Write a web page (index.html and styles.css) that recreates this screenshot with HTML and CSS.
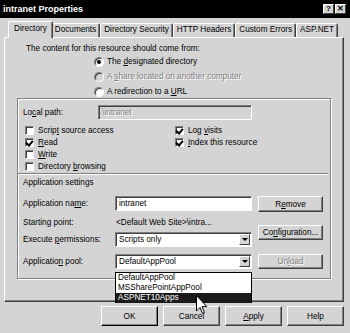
FILE: index.html
```html
<!DOCTYPE html>
<html lang="en">
<head>
    <meta charset="UTF-8">
    <title>intranet Properties</title>
    <link rel="stylesheet" href="styles.css">
</head>
<body>
<div class="dialog">
    <div class="titlebar">
        <span class="title">intranet Properties</span>
        <span class="tbtns"><span class="tbtn">?</span><span class="tbtn">&#x2715;</span></span>
    </div>
    <div class="tabs">
        <span class="tab active">Directory</span>
        <span class="tab">Documents</span>
        <span class="tab">Directory Security</span>
        <span class="tab">HTTP Headers</span>
        <span class="tab">Custom Errors</span>
        <span class="tab">ASP.NET</span>
    </div>
    <div class="panel">
        <p class="intro">The content for this resource should come from:</p>
        <div class="radios">
            <div class="radio"><span class="rb on"></span><span>The <u>d</u>esignated directory</span></div>
            <div class="radio disabled"><span class="rb"></span><span>A <u>s</u>hare located on another computer</span></div>
            <div class="radio"><span class="rb"></span><span>A redirection to a <u>U</u>RL</span></div>
        </div>
        <div class="group">
            <div class="pathrow">
                <span class="lbl">Lo<u>c</u>al path:</span>
                <span class="field off">\intranet</span>
            </div>
            <div class="checks">
                <div class="check"><span class="cb"></span><span>Scrip<u>t</u> source access</span></div>
                <div class="check"><span class="cb on"></span><span>Log <u>v</u>isits</span></div>
                <div class="check"><span class="cb on"></span><span><u>R</u>ead</span></div>
                <div class="check"><span class="cb on"></span><span><u>I</u>ndex this resource</span></div>
                <div class="check"><span class="cb"></span><span><u>W</u>rite</span></div>
                <div class="check"></div>
                <div class="check"><span class="cb"></span><span>Directory <u>b</u>rowsing</span></div>
            </div>
            <div class="sep"></div>
            <div class="settings">Application settings</div>
            <div class="form">
                <div class="grid">
                    <span class="lbl">Application na<u>m</u>e:</span>
                    <span class="field">intranet</span>
                    <span class="lbl">Starting point:</span>
                    <span class="plain">&lt;Default Web Site&gt;\intra...</span>
                    <span class="lbl">Execute <u>p</u>ermissions:</span>
                    <span class="field select">Scripts only<span class="arrow"></span></span>
                    <span class="lbl">Applicatio<u>n</u> pool:</span>
                    <span class="field select">DefaultAppPool<span class="arrow"></span></span>
                </div>
                <div class="sidebtns">
                    <span class="btn remove"><span>R<u>e</u>move</span></span>
                    <span class="btn config"><span>Co<u>n</u>figuration...</span></span>
                    <span class="btn unload disabled"><span>Un<u>l</u>oad</span></span>
                </div>
            </div>
        </div>
    </div>
    <div class="footer">
        <span class="btn big default">OK</span>
        <span class="btn big">Cancel</span>
        <span class="btn big"><span><u>A</u>pply</span></span>
        <span class="btn big">Help</span>
    </div>
    <ul class="droplist">
        <li>DefaultAppPool</li>
        <li>MSSharePointAppPool</li>
        <li class="current">ASPNET10Apps</li>
    </ul>
    <svg class="cursor" width="12" height="20" viewBox="0 0 12 20">
        <path d="M0.5 0.5 L0.5 16 L4 12.5 L6.5 18.5 L8.5 17.6 L6 11.6 L10.8 11.6 Z" fill="#fff" stroke="#000" stroke-width="1"/>
    </svg>
</div>
</body>
</html>
```

FILE: styles.css
```css
* {
    margin: 0;
    padding: 0;
    box-sizing: border-box;
    list-style: none;
}

body {
    background: #d4d4d4;
    font-family: "Liberation Sans", Arial, sans-serif;
    font-size: 8.2px;
    color: #000;
}

.dialog {
    position: relative;
    width: 350px;
    height: 333px;
    background: #d4d4d4;
    overflow: hidden;
}

.titlebar {
    height: 18px;
    background: #000;
    color: #fff;
    display: flex;
    align-items: center;
    justify-content: space-between;
    padding: 0 4px 0 3px;
}

.title {
    font-weight: bold;
    font-size: 9px;
}

.tbtns {
    display: flex;
    gap: 1px;
}

.tbtn {
    width: 11px;
    height: 10px;
    background: #d4d4d4;
    color: #000;
    font-weight: bold;
    font-size: 8px;
    line-height: 8px;
    display: flex;
    align-items: center;
    justify-content: center;
    border: 1px solid;
    border-color: #fff #404040 #404040 #fff;
}

.tabs {
    display: flex;
    align-items: flex-end;
    height: 19px;
    padding-left: 10px;
}

.tab {
    height: 14px;
    line-height: 12px;
    padding: 0 3px;
    background: #d4d4d4;
    border-top: 1px solid #fff;
    border-left: 1px solid #fff;
    border-right: 1px solid #404040;
    box-shadow: inset -1px 0 0 #808080;
    border-radius: 2px 2px 0 0;
    white-space: nowrap;
}

.tab.active {
    position: relative;
    z-index: 1;
    height: 17px;
    line-height: 14px;
    margin: 0 -2px -1px;
    padding: 0 5px;
}

.panel {
    width: 340px;
    height: 265px;
    margin-left: 4px;
    border: 1px solid;
    border-color: #fff #404040 #404040 #fff;
    box-shadow: inset -1px -1px 0 #808080;
}

.intro {
    padding: 5px 0 0 21px;
    line-height: 11px;
}

.radios {
    margin-left: 89px;
}

.radio {
    display: flex;
    align-items: center;
    gap: 3px;
    height: 15px;
}

.radio.disabled {
    color: #808080;
    text-shadow: 1px 1px 0 #fff;
}

.rb {
    position: relative;
    width: 10px;
    height: 10px;
    border-radius: 50%;
    background: #fff;
    border: 1px solid;
    border-color: #808080 #fff #fff #808080;
    box-shadow: inset 1px 1px 0 #404040;
}

.radio.disabled .rb {
    background: #d4d4d4;
}

.rb.on::after {
    content: "";
    position: absolute;
    left: 2px;
    top: 2px;
    width: 4px;
    height: 4px;
    border-radius: 50%;
    background: #000;
}

.group {
    width: 314px;
    height: 181px;
    margin: -1px 0 0 12px;
    padding-left: 5px;
    border: 1px solid #808080;
    box-shadow: inset 1px 1px 0 #fff, 1px 1px 0 #fff;
}

.pathrow {
    display: flex;
    align-items: center;
    margin-top: 6px;
}

.lbl {
    white-space: nowrap;
}

.pathrow .lbl {
    width: 75px;
}

.field {
    position: relative;
    display: flex;
    align-items: center;
    height: 15px;
    padding-left: 3px;
    background: #fff;
    border: 1px solid;
    border-color: #808080 #fff #fff #808080;
    box-shadow: inset 1px 1px 0 #404040;
    white-space: nowrap;
}

.pathrow .field {
    width: 154px;
}

.field.off {
    background: #d4d4d4;
    color: #808080;
    text-shadow: 1px 1px 0 #fff;
}

.checks {
    display: grid;
    grid-template-columns: 150px 1fr;
    grid-auto-rows: 12px;
    margin-top: 4px;
    padding-left: 2px;
}

.check {
    display: flex;
    align-items: center;
    gap: 4px;
}

.cb {
    position: relative;
    width: 9px;
    height: 9px;
    background: #fff;
    border: 1px solid;
    border-color: #808080 #fff #fff #808080;
    box-shadow: inset 1px 1px 0 #404040;
}

.cb.on::after {
    content: "";
    position: absolute;
    left: 1px;
    top: 0;
    width: 3px;
    height: 5px;
    border: solid #000;
    border-width: 0 2px 2px 0;
    transform: rotate(40deg);
}

.sep {
    height: 2px;
    margin: 1px 2px 0 -5px;
    border-top: 1px solid #808080;
    border-bottom: 1px solid #fff;
}

.settings {
    margin-top: 2px;
    line-height: 11px;
}

.form {
    display: flex;
    margin-top: 6px;
}

.grid {
    display: grid;
    grid-template-columns: 92px 137px;
    grid-template-rows: 19px 18px 17px 27px;
    align-items: center;
}

.plain {
    padding-left: 1px;
    white-space: nowrap;
}

.select .arrow {
    position: absolute;
    right: 1px;
    top: 1px;
    width: 11px;
    height: 11px;
    background: #d4d4d4;
    border: 1px solid;
    border-color: #fff #404040 #404040 #fff;
}

.select .arrow::after {
    content: "";
    position: absolute;
    left: 2px;
    top: 3px;
    border-left: 3px solid transparent;
    border-right: 3px solid transparent;
    border-top: 3px solid #000;
}

.sidebtns {
    display: flex;
    flex-direction: column;
    margin-left: 6px;
    padding-top: 2px;
}

.btn {
    display: flex;
    align-items: center;
    justify-content: center;
    height: 15px;
    background: #d4d4d4;
    border: 1px solid;
    border-color: #fff #404040 #404040 #fff;
    box-shadow: inset -1px -1px 0 #808080;
    white-space: nowrap;
}

.sidebtns .btn {
    width: 65px;
}

.btn.remove {
    height: 16px;
}

.btn.config {
    margin-top: 13px;
}

.btn.unload {
    margin-top: 14px;
}

.btn.disabled {
    color: #808080;
    text-shadow: 1px 1px 0 #fff;
}

.footer {
    display: flex;
    justify-content: flex-end;
    gap: 5px;
    margin-top: 4px;
    padding-right: 6px;
}

.btn.big {
    width: 57px;
    height: 20px;
}

.btn.default {
    border-color: #fff #000 #000 #fff;
}

.droplist {
    position: absolute;
    left: 115px;
    top: 272px;
    width: 137px;
    height: 31px;
    background: #fff;
    border: 1px solid #000;
}

.droplist li {
    height: 10px;
    line-height: 10px;
    padding-left: 2px;
}

.droplist li.current {
    background: #1a1a1a;
    color: #fff;
}

.cursor {
    position: absolute;
    left: 196px;
    top: 295px;
}
```
